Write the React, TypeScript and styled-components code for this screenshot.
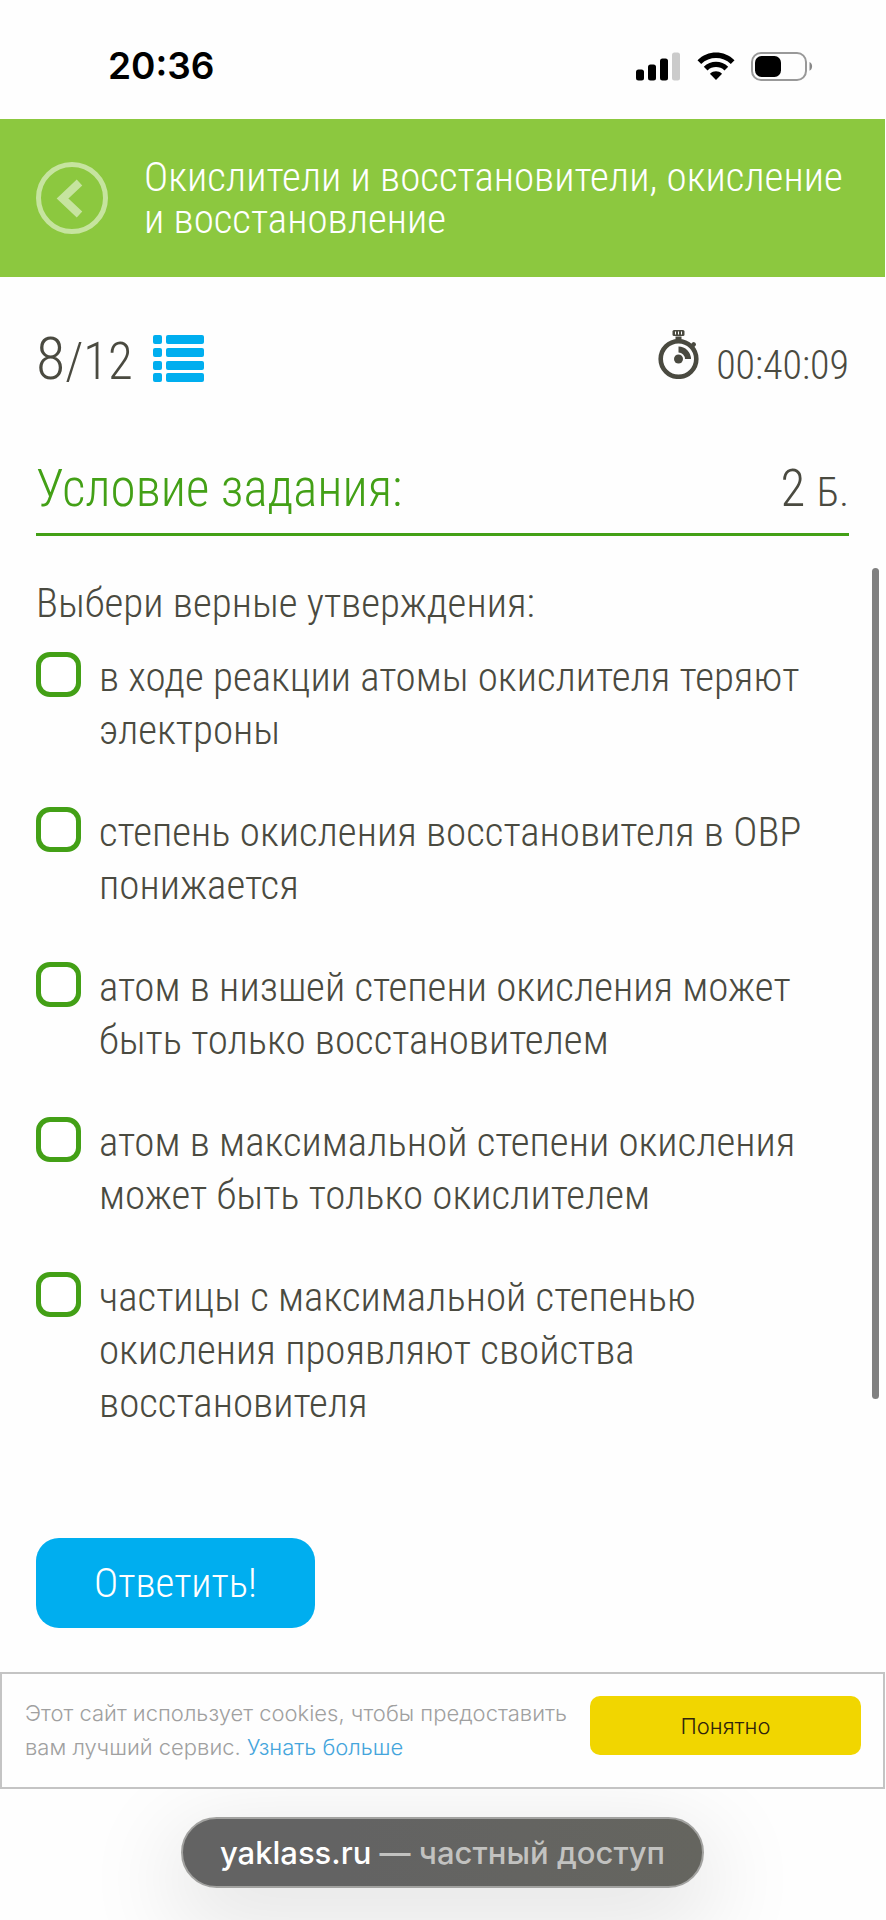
import React from "react";
import styled, { createGlobalStyle } from "styled-components";

const GlobalStyle = createGlobalStyle`
  *, *::before, *::after { box-sizing: border-box; }
  body {
    margin: 0;
    background: #fefefe;
    color: #4a4a40;
    font-family: "Roboto Condensed", Roboto, sans-serif;
    font-weight: 300;
  }
`;

const Page = styled.div`
  position: relative;
  min-height: 100vh;
  padding-right: 1px;
  display: flex;
  flex-direction: column;
`;

const StatusBar = styled.header`
  height: 119px;
  padding: 13px 72px 0 108px;
  display: flex;
  align-items: center;
  justify-content: space-between;
  color: #000;
`;

const Clock = styled.time`
  font: 600 37px/48px Inter, sans-serif;
`;

const StatusIcons = styled.div`
  display: flex;
  align-items: center;
  gap: 16px;
`;

const TopicBar = styled.div`
  min-height: 158px;
  padding: 0 36px;
  display: flex;
  align-items: center;
  gap: 36px;
  background: #8cc83f;
  color: #fff;
`;

const BackButton = styled.button`
  flex: none;
  width: 72px;
  height: 72px;
  padding: 0;
  border: 0;
  background: none;
  color: #c6e49f;
`;

const Topic = styled.h1`
  margin: 0;
  font-size: 41px;
  font-weight: 300;
  line-height: 42px;
`;

const Content = styled.main`
  padding: 0 36px;
  display: flex;
  flex-direction: column;
`;

const ProgressRow = styled.div`
  margin-top: 50px;
  display: flex;
  align-items: baseline;
  justify-content: space-between;
`;

const Progress = styled.div`
  display: flex;
  align-items: center;
  gap: 20px;
`;

const Counter = styled.span`
  font-size: 51px;
  line-height: 64px;
`;

const Current = styled.span`
  font-size: 60px;
`;

const ListButton = styled.button`
  margin-bottom: 4px;
  padding: 0;
  border: 0;
  background: none;
  display: flex;
  color: #00aeef;
`;

const Timer = styled.div`
  display: flex;
  align-items: baseline;
  gap: 16px;
`;

const TimerValue = styled.time`
  font-size: 40px;
  line-height: 48px;
`;

const TaskHeading = styled.div`
  margin-top: 63px;
  padding-bottom: 9px;
  border-bottom: 3px solid #43a016;
  display: flex;
  align-items: baseline;
  justify-content: space-between;
`;

const TaskTitle = styled.h2`
  margin: 0;
  color: #43a016;
  font-size: 51px;
  font-weight: 300;
  line-height: 64px;
`;

const Points = styled.span`
  font-size: 51px;
  line-height: 64px;
`;

const PointsUnit = styled.span`
  font-size: 41px;
`;

const Choices = styled.fieldset`
  min-width: 0;
  margin: 0;
  padding: 0;
  border: 0;
`;

const Prompt = styled.legend`
  padding: 41px 0 17px;
  font-size: 41px;
  line-height: 53px;
`;

const Choice = styled.label`
  margin-bottom: 45px;
  padding-right: 18px;
  display: flex;
  align-items: flex-start;
  gap: 18px;
  font-size: 41px;
  line-height: 53px;
`;

const Checkbox = styled.input`
  appearance: none;
  flex: none;
  width: 45px;
  height: 45px;
  margin: 5px 0 0;
  border: 5px solid #43a016;
  border-radius: 14px;
  background: #fff;

  &:checked { background: #8cc83f; }
`;

const ChoiceText = styled.span`
  padding-top: 4px;
`;

const AnswerButton = styled.button`
  align-self: flex-start;
  min-width: 279px;
  height: 90px;
  margin: 63px 0 44px;
  border: 0;
  border-radius: 23px;
  background: #00aeef;
  color: #fff;
  font: inherit;
  font-size: 41px;
`;

const CookieNotice = styled.aside`
  min-height: 117px;
  padding: 22px 22px 0 23px;
  border: 2px solid #c4c4c4;
  display: flex;
  align-items: flex-start;
  justify-content: space-between;
  color: #a0a0a0;
  font: 300 22px/34px Inter, sans-serif;
`;

const CookieText = styled.p`
  margin: 0;
`;

const CookieLink = styled.a`
  color: #45a5dc;
  text-decoration: none;
`;

const AcceptButton = styled.button`
  flex: none;
  width: 271px;
  height: 59px;
  border: 0;
  border-radius: 10px;
  background: #f1d600;
  color: #30240c;
  font: inherit;
`;

const BrowserBar = styled.footer`
  flex: 1;
  padding: 28px 0 24px;
  overflow: hidden;
  display: flex;
  justify-content: center;
  align-items: flex-start;
`;

const AddressPill = styled.button`
  height: 71px;
  padding: 0 37px;
  border: 2px solid #a2a2a0;
  border-radius: 36px;
  background: linear-gradient(90deg, #636363 30%, #65655f);
  box-shadow: 0 26px 90px 14px rgba(0, 0, 0, 0.1);
  color: #c2c2c0;
  font: 500 31px/40px Inter, sans-serif;
  white-space: nowrap;
`;

const Host = styled.span`
  color: #fff;
`;

const ScrollThumb = styled.div`
  position: absolute;
  top: 568px;
  right: 7px;
  width: 7px;
  height: 831px;
  border-radius: 4px;
  background: #808080;
`;

const SignalIcon = () => (
  <svg width="45" height="29" viewBox="0 0 45 29" aria-hidden="true">
    <rect x="0" y="17.500" width="8" height="11" rx="2.500" />
    <rect x="12" y="12.500" width="8" height="16" rx="2.500" />
    <rect x="24" y="6.500" width="8" height="22" rx="2.500" />
    <rect x="36" y="0.500" width="8" height="28" rx="2.500" fill="#cbcbcb" />
  </svg>
);

const WifiIcon = () => (
  <svg width="38" height="29" viewBox="0 0 38 29" aria-hidden="true">
    <path d="M.5 8.300C10.800-2 27.200-2 37.500 8.300L33.800 11.900C25.600 4 12.400 4 4.200 11.900Z" />
    <path d="M6.800 14.800C13.500 8.200 24.500 8.200 31.200 14.800L27.500 18.400C22.800 14 15.200 14 10.500 18.400Z" />
    <path d="M13.200 21.400C16.400 18.600 21.600 18.600 24.800 21.400Q25 21.800 24.600 22.300L19 28L13.400 22.300Q13 21.800 13.200 21.400Z" />
  </svg>
);

const BatteryIcon = () => (
  <svg width="62" height="29" viewBox="0 0 62 29" aria-hidden="true">
    <rect x="1" y="1" width="54" height="27" rx="9" fill="none" stroke="#999" strokeWidth="2" />
    <rect x="4" y="4" width="26" height="21" rx="6.500" />
    <path d="M58.500 10C62 11.500 62 17 58.500 18.800Z" fill="#888" />
  </svg>
);

const BackIcon = () => (
  <svg width="72" height="72" viewBox="0 0 72 72" aria-hidden="true">
    <circle cx="36" cy="36" r="33.500" fill="none" stroke="currentColor" strokeWidth="5" />
    <path d="M43.500 20.500L26.500 36.500L43.500 52.500" fill="none" stroke="currentColor" strokeWidth="8" />
  </svg>
);

const ListIcon = () => (
  <svg width="51" height="48" viewBox="0 0 51 48" fill="currentColor" aria-hidden="true">
    {[0, 13, 26, 38].map((y) => (
      <g key={y}>
        <rect y={y} width="9" height="9" rx="2" />
        <rect x="13" y={y} width="38" height="9" rx="2" />
      </g>
    ))}
  </svg>
);

const StopwatchIcon = () => (
  <svg width="42" height="49" viewBox="0 0 42 49" fill="#4a4a40" aria-hidden="true">
    <rect x="14.500" y="0" width="12" height="6" rx="1.500" />
    <path d="M17.500 1.500V4.500M20.500 1.500V4.500M23.500 1.500V4.500" stroke="#fff" strokeWidth="1" />
    <path d="M17.500 6.500H23.500V11H17.500Z" />
    <circle cx="20.500" cy="29" r="17.800" fill="none" stroke="#4a4a40" strokeWidth="4.600" />
    <path d="M32.500 14.500L35 12Q38 12 38 15L35.500 18Z" />
    <circle cx="20.500" cy="29" r="4.500" />
    <path d="M20.500 16.500A12.500 12.500 0 0 1 33 29H27A6.500 6.500 0 0 0 20.500 22.500Z" />
  </svg>
);

const choices = [
  "в ходе реакции атомы окислителя теряют электроны",
  "степень окисления восстановителя в ОВР понижается",
  "атом в низшей степени окисления может быть только восстановителем",
  "атом в максимальной степени окисления может быть только окислителем",
  "частицы с максимальной степенью окисления проявляют свойства восстановителя",
];

export default function App() {
  return (
    <>
      <GlobalStyle />
      <Page>
        <StatusBar>
          <Clock>20:36</Clock>
          <StatusIcons>
            <SignalIcon />
            <WifiIcon />
            <BatteryIcon />
          </StatusIcons>
        </StatusBar>
        <TopicBar>
          <BackButton type="button" aria-label="Назад">
            <BackIcon />
          </BackButton>
          <Topic>Окислители и восстановители, окисление и восстановление</Topic>
        </TopicBar>
        <Content>
          <ProgressRow>
            <Progress>
              <Counter>
                <Current>8</Current>/12
              </Counter>
              <ListButton type="button" aria-label="Список заданий">
                <ListIcon />
              </ListButton>
            </Progress>
            <Timer>
              <StopwatchIcon />
              <TimerValue>00:40:09</TimerValue>
            </Timer>
          </ProgressRow>
          <TaskHeading>
            <TaskTitle>Условие задания:</TaskTitle>
            <Points>
              2 <PointsUnit>Б.</PointsUnit>
            </Points>
          </TaskHeading>
          <Choices>
            <Prompt>Выбери верные утверждения:</Prompt>
            {choices.map((text) => (
              <Choice key={text}>
                <Checkbox type="checkbox" />
                <ChoiceText>{text}</ChoiceText>
              </Choice>
            ))}
          </Choices>
          <AnswerButton type="button">Ответить!</AnswerButton>
        </Content>
        <CookieNotice>
          <CookieText>
            Этот сайт использует cookies, чтобы предоставить
            <br />
            вам лучший сервис. <CookieLink href="#cookies">Узнать больше</CookieLink>
          </CookieText>
          <AcceptButton type="button">Понятно</AcceptButton>
        </CookieNotice>
        <BrowserBar>
          <AddressPill type="button">
            <Host>yaklass.ru</Host> — частный доступ
          </AddressPill>
        </BrowserBar>
        <ScrollThumb />
      </Page>
    </>
  );
}
